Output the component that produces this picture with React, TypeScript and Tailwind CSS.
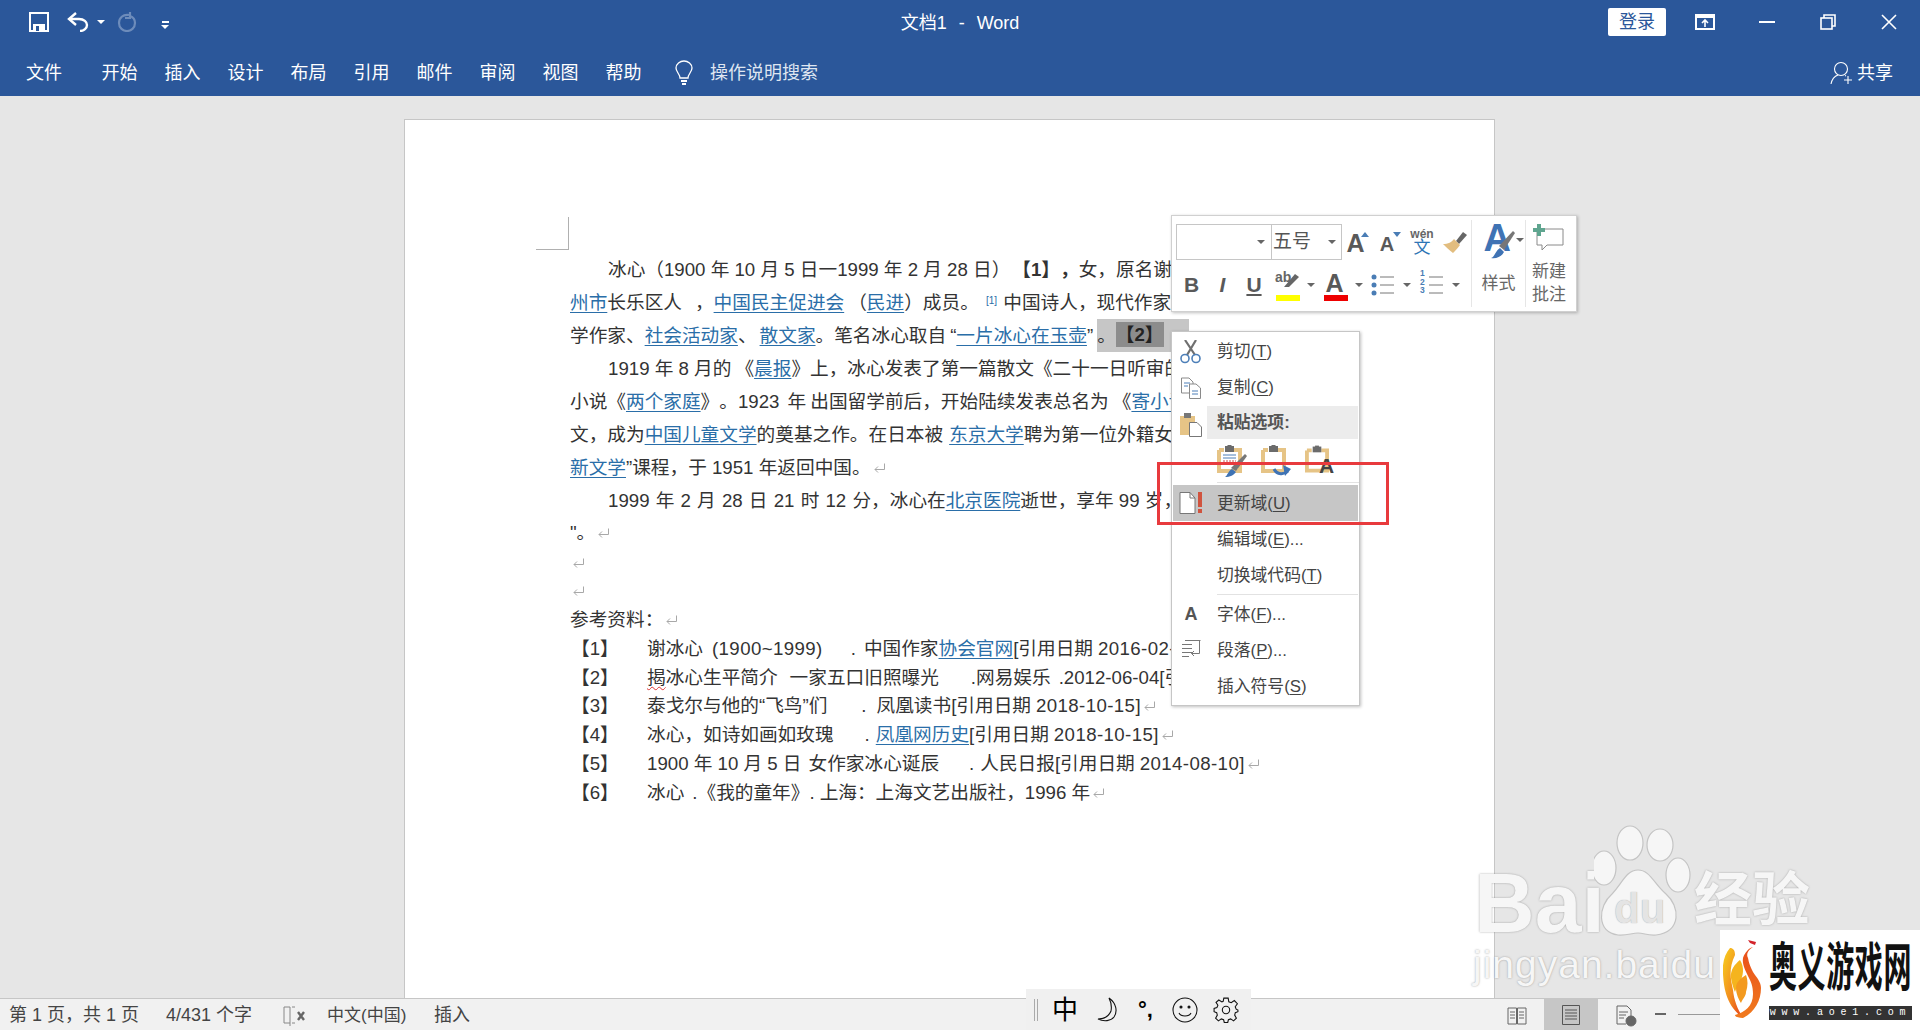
import React from "react";

const Ret = () => (
  <svg width="13" height="13" viewBox="0 0 13 13" className="inline-block align-[-1px] ml-[2px]" fill="none" stroke="#a8a8a8" strokeWidth="1">
    <path d="M11.5 1.5V7.5H2" />
    <path d="M5 4.5L2 7.5L5 10.5" />
  </svg>
);
const L = ({ children }: { children: React.ReactNode }) => (
  <a className="text-[#2a6ea8] underline underline-offset-[3px] decoration-[1px]">{children}</a>
);
const Line = ({ children, h = "h-[33px] leading-[33px]", indent = false }: { children?: React.ReactNode; h?: string; indent?: boolean }) => (
  <div className={`${h} ${indent ? "pl-[38px]" : ""} w-[790px] overflow-hidden whitespace-nowrap`}>{children}</div>
);
const Ref = ({ n, children }: { n: number; children: React.ReactNode }) => (
  <div className="h-[28.8px] leading-[28.8px] w-[790px] flex overflow-hidden whitespace-nowrap">
    <span className="w-[77px] shrink-0 pl-[1px]">【{n}】</span>
    <span>{children}</span>
  </div>
);
const D = ({ children }: { children: React.ReactNode }) => <span className="ml-[5px] tracking-[0.4px]">{children}</span>;
const Caret = ({ c = "#666" }: { c?: string }) => (
  <svg width="8" height="4" viewBox="0 0 8 4" className="shrink-0"><path d="M0 0H8L4 4Z" fill={c} /></svg>
);
const Tab = ({ t }: { t: string }) => <div className="w-[63px] text-center">{t}</div>;

const MenuItem = ({ icon, children, active = false, low = true }: { icon?: React.ReactNode; children: React.ReactNode; active?: boolean; low?: boolean }) => (
  <div className={`h-[36px] flex items-center ${active ? "bg-[#c6c6c6] mr-[1px] ml-[1px]" : "ml-[1px]"}`}>
    <div className="w-[36px] h-full shrink-0 flex items-center justify-center">{icon}</div>
    <div className={`ml-[8px] text-[16.8px] text-[#444] whitespace-nowrap ${low ? "pt-[2px]" : ""}`}>{children}</div>
  </div>
);
const U = ({ children }: { children: React.ReactNode }) => <span className="underline underline-offset-2">{children}</span>;

const ClipBase = () => (
  <>
    <path d="M2 5H7M17 5H23V26H2V5" fill="none" stroke="#e6c486" strokeWidth="4" />
    <rect x="8" y="1" width="9" height="6" fill="#6b6b6b" />
    <rect x="10.5" y="0" width="4" height="3" fill="#6b6b6b" />
  </>
);

const Toolbar = () => (
  <div className="absolute left-[1171px] top-[215px] w-[406px] h-[97px] bg-white border border-[#d0d0d0] shadow-[1px_1px_3px_rgba(0,0,0,0.25)] flex text-[#595959]">
    <div className="w-[299px] shrink-0 pl-[4px] pt-[8px]">
      <div className="flex items-center h-[36px]">
        <div className="w-[166px] h-[36px] border border-[#c6c6c6] flex shrink-0">
          <div className="w-[95px] border-r border-[#c6c6c6] flex items-center justify-end pr-[6px]"><Caret /></div>
          <div className="flex-1 flex items-center justify-between pr-[5px] pl-[1px] text-[19px] text-[#555]"><span>五号</span><Caret /></div>
        </div>
        <div className="w-[30px] h-full relative flex items-center justify-center font-bold text-[25px] text-[#595959] pr-[3px] pt-[3px]">
          A<svg width="8" height="5" className="absolute right-[3px] top-[8px]"><path d="M0 5H8L4 0Z" fill="#4a7db5" /></svg>
        </div>
        <div className="w-[32px] h-full relative flex items-center justify-center font-bold text-[20px] text-[#595959] pr-[2px] pt-[3px]">
          A<svg width="8" height="5" className="absolute right-[3px] top-[8px]"><path d="M0 0H8L4 5Z" fill="#4a7db5" /></svg>
        </div>
        <div className="w-[36px] h-full flex flex-col items-center justify-center leading-none">
          <span className="text-[12px] font-bold text-[#666]">wén</span>
          <span className="text-[17px] text-[#2e75b5] mt-[-1px]">文</span>
        </div>
        <svg width="24" height="22" viewBox="0 0 24 22" className="ml-[3px]">
          <path d="M13 10L20 1L24 4L16 13Z" fill="#666" />
          <path d="M0 13C5 13 9 11 11 8L17 14C14 18 12 20 10 22C6 19 3 16 0 13Z" fill="#e2bd7f" />
        </svg>
      </div>
      <div className="flex items-center h-[44px] mt-[3px] text-[#595959]">
        <div className="w-[31px] text-center font-bold text-[21px]">B</div>
        <div className="w-[31px] text-center font-bold italic text-[21px]">I</div>
        <div className="w-[32px] text-center font-bold text-[21px] underline underline-offset-2">U</div>
        <div className="w-[36px] h-[30px] relative">
          <span className="absolute left-[5px] top-[-3px] text-[14px] font-bold text-[#666]">ab</span>
          <svg width="16" height="16" className="absolute left-[14px] top-[2px]"><path d="M0 15L11 2L15 5L5 15Z" fill="#666" /></svg>
          <div className="absolute left-[6px] bottom-[-1px] w-[24px] h-[6px] bg-[#ffff00]" />
        </div>
        <div className="w-[10px] flex justify-center"><Caret /></div>
        <div className="w-[37px] h-[30px] relative text-center font-bold text-[25px] leading-[26px] text-[#595959]">
          A<div className="absolute left-[8px] bottom-[-1px] w-[24px] h-[6px] bg-[#ee0000]" />
        </div>
        <div className="w-[12px] flex justify-center"><Caret /></div>
        <div className="w-[35px] flex justify-center">
          <svg width="24" height="22" viewBox="0 0 24 22" fill="#4a7db5" stroke="none">
            <circle cx="3" cy="3" r="2.5" /><circle cx="3" cy="11" r="2.5" /><circle cx="3" cy="19" r="2.5" />
            <path d="M9 3H23M9 11H23M9 19H23" stroke="#777" strokeWidth="1" />
          </svg>
        </div>
        <div className="w-[14px] flex justify-center"><Caret /></div>
        <div className="w-[35px] relative flex justify-center">
          <div className="absolute left-[6px] top-[-5px] text-[#4a7db5] text-[8.5px] leading-[8.5px] font-bold text-center">1<br />2<br />3</div>
          <svg width="24" height="22" viewBox="0 0 24 22"><path d="M9 3H23M9 11H23M9 19H23" stroke="#777" strokeWidth="1" /></svg>
        </div>
        <div className="w-[14px] flex justify-center"><Caret /></div>
      </div>
    </div>
    <div className="w-[1px] bg-[#e6e6e6] my-[4px] shrink-0" />
    <div className="w-[53px] shrink-0 flex flex-col items-center pt-[8px]">
      <div className="relative w-[46px] h-[33px]">
        <span className="absolute left-[8px] top-[-6px] text-[38px] leading-[40px] font-bold text-[#3f73b4]">A</span>
        <svg width="24" height="30" viewBox="0 0 24 30" className="absolute left-[15px] top-[5px]">
          <path d="M8 17L22 2L24 4L13 21Z" fill="#777" />
          <path d="M0 29C4 28 4 22 9 19L13 23C11 27 6 30 0 29Z" fill="#3f73b4" />
        </svg>
        <div className="absolute right-[-2px] top-[14px]"><Caret /></div>
      </div>
      <div className="text-[17px] mt-[14px] text-[#666]">样式</div>
    </div>
    <div className="w-[1px] bg-[#e6e6e6] my-[4px] shrink-0" />
    <div className="flex-1 flex flex-col items-center pt-[8px] pr-[4px] leading-[23px] text-[17px] text-[#666]">
      <svg width="32" height="30" viewBox="0 0 32 30" className="shrink-0">
        <path d="M4 5H30V21H14L9 26V21H4Z" fill="none" stroke="#8a8a8a" strokeWidth="1" />
        <path d="M4 0H8V4H12V8H8V12H4V8H0V4H4Z" fill="#5fa58f" />
      </svg>
      <div className="mt-[6px]">新建</div>
      <div>批注</div>
    </div>
  </div>
);

const Menu = () => (
  <div className="absolute left-[1171px] top-[331px] w-[189px] h-[375px] bg-white border border-[#c6c6c6] shadow-[1px_1px_3px_rgba(0,0,0,0.25)] pt-[2px]">
    <MenuItem low={false} icon={
      <svg width="22" height="24" viewBox="0 0 22 24" fill="none">
        <path d="M5 0L15 15M16 0L7 15" stroke="#707070" strokeWidth="2.2" />
        <circle cx="5" cy="18.5" r="4" stroke="#4d7fb8" strokeWidth="1.6" /><circle cx="16" cy="18.5" r="4" stroke="#4d7fb8" strokeWidth="1.6" />
      </svg>
    }>剪切(<U>T</U>)</MenuItem>
    <MenuItem low={false} icon={
      <svg width="22" height="22" viewBox="0 0 22 22" fill="#fff" stroke="#8a8a8a">
        <path d="M1.5 1H9L13 5V16H1.5Z" /><path d="M9.5 7H16L20.5 11V21.5H9.5Z" />
        <path d="M4 6H10M4 9H8M12 14H18M12 17H18" stroke="#4d7fb8" />
      </svg>
    }>复制(<U>C</U>)</MenuItem>
    <div className="h-[33px] flex items-center">
      <div className="w-[35px] h-full shrink-0 flex items-center justify-center">
        <svg width="22" height="24" viewBox="0 0 22 24" className="mt-[4px] ml-[2px]">
          <rect x="0" y="3" width="15" height="19" fill="#e6c486" /><rect x="4" y="0" width="7" height="5" fill="#777" />
          <path d="M9.5 9.5H17L21.5 14V23.5H9.5Z" fill="#fff" stroke="#777" />
        </svg>
      </div>
      <div className="flex-1 h-full bg-[#ececec] mr-[1px] flex items-center pl-[10px] font-bold text-[16.8px] text-[#555]">粘贴选项:</div>
    </div>
    <div className="h-[44px] border-b border-[#e2e2e2] ml-[45px] flex gap-[20px] pt-[6px]">
      <div className="relative w-[24px] h-[30px]">
        <svg width="30" height="32" viewBox="0 0 30 32" className="absolute left-0 top-0">
          <ClipBase />
          <path d="M6 10H19M6 13H19" stroke="#4d7fb8" /><path d="M6 16H19M6 19H19" stroke="#c9534c" strokeDasharray="2 1" />
          <path d="M14 23L28 9L30 11L19 26Z" fill="#777" /><path d="M8 32C11 30 11 26 15 24L19 27C17 30 13 32 8 32Z" fill="#3f73b4" />
        </svg>
      </div>
      <div className="relative w-[24px] h-[30px]">
        <svg width="30" height="32" viewBox="0 0 30 32" className="absolute left-0 top-0">
          <ClipBase />
          <path d="M13 24C16 30 23 30 27 26" fill="none" stroke="#3f73b4" strokeWidth="3" />
          <path d="M22 20L30 24L24 31Z" fill="#3f73b4" />
        </svg>
      </div>
      <div className="relative w-[24px] h-[30px]">
        <svg width="24" height="30" viewBox="0 0 25 30" className="absolute left-0 top-0"><ClipBase /></svg>
        <span className="absolute left-[14px] top-[8px] font-bold text-[21px] leading-[26px] text-[#444]">A</span>
      </div>
    </div>
    <div className="h-[2px]" />
    <MenuItem active icon={
      <svg width="24" height="22" viewBox="0 0 24 22">
        <path d="M1 0.5H11L16 6V21.5H1Z" fill="#fff" stroke="#777" /><path d="M11 0.5V6H16" fill="none" stroke="#777" />
        <rect x="19" y="0" width="4" height="15" fill="#d0533e" /><rect x="19" y="17" width="4" height="4" fill="#d0533e" />
      </svg>
    }>更新域(<U>U</U>)</MenuItem>
    <MenuItem>编辑域(<U>E</U>)...</MenuItem>
    <MenuItem>切换域代码(<U>T</U>)</MenuItem>
    <div className="h-[3px] flex items-center pl-[45px] pr-[1px]"><div className="h-[1px] w-full bg-[#e2e2e2]" /></div>
    <MenuItem icon={<span className="font-bold text-[18px] text-[#555]">A</span>}>字体(<U>F</U>)...</MenuItem>
    <MenuItem icon={
      <svg width="20" height="20" viewBox="0 0 20 20" fill="none" stroke="#777">
        <path d="M4 0.5H19.5M1 4.5H11M1 8.5H11M1 12.5H11M1 16.5H8" />
        <path d="M18.5 1V13.5H10.5M13 11L10.5 13.5L13 16" />
      </svg>
    }>段落(<U>P</U>)...</MenuItem>
    <MenuItem>插入符号(<U>S</U>)</MenuItem>
  </div>
);

const Watermark = () => (
  <div className="absolute left-[1470px] top-[820px] w-[350px] h-[170px] pointer-events-none">
    <span className="absolute left-[4px] top-[38px] text-[84px] leading-[90px] text-[#f6f6f6] font-bold [text-shadow:0_0_2px_rgba(100,100,100,0.6)]">Bai</span>
    <svg width="100" height="120" viewBox="0 0 100 120" className="absolute left-[124px] top-0">
      <g fill="#f6f6f6" stroke="#c4c4c4" strokeWidth="1.2">
        <ellipse cx="36" cy="23" rx="13" ry="17" /><ellipse cx="66" cy="25" rx="13" ry="16" />
        <ellipse cx="10" cy="48" rx="12" ry="17" /><ellipse cx="84" cy="55" rx="12" ry="17" />
        <path d="M44 50C56 50 60 64 72 74C86 86 88 112 62 115C54 116 50 113 44 113C38 113 32 116 24 115C2 112 4 86 18 74C28 64 32 50 44 50Z" />
      </g>
    </svg>
    <span className="absolute left-[144px] top-[66px] text-[42px] leading-[46px] text-[#e4e4e4] font-bold [text-shadow:0_0_1px_rgba(100,100,100,0.6)]">du</span>
    <span className="absolute left-[224px] top-[48px] text-[58px] leading-[64px] text-[#f6f6f6] font-bold [text-shadow:0_0_2px_rgba(100,100,100,0.55)]">经验</span>
    <span className="absolute left-[3px] top-[122px] text-[39px] leading-[46px] text-[#f6f6f6] tracking-[1px] [text-shadow:0_0_2px_rgba(100,100,100,0.6)]">jingyan.baidu</span>
  </div>
);

const AoyiLogo = () => (
  <div className="absolute right-0 bottom-0 w-[200px] h-[100px] bg-white flex">
    <svg width="40" height="80" viewBox="0 0 40 80" className="ml-[3px] mt-[10px] shrink-0">
      <defs>
        <linearGradient id="fl" x1="0" y1="0" x2="1" y2="1">
          <stop offset="0" stopColor="#f7d21e" /><stop offset="0.55" stopColor="#f28a1f" /><stop offset="1" stopColor="#e33b1b" />
        </linearGradient>
        <linearGradient id="fr" x1="0" y1="0" x2="0" y2="1">
          <stop offset="0" stopColor="#e94e1b" /><stop offset="1" stopColor="#f07a1e" />
        </linearGradient>
      </defs>
      <path d="M7 8C2 14 -1 22 0 34C1 50 4 66 20 78C14 68 11 60 10 50C8 40 5 30 12 15C12 10 10 8 7 8Z" fill="url(#fl)" />
      <path d="M17 20C12 24 7 30 8 38C9 44 11 50 12 52C14 46 16 44 17 42C20 36 22 28 17 20Z" fill="#f5b41e" />
      <path d="M23 35C18 38 13 42 13 48C13 54 16 60 18 63C20 58 23 56 23 52C25 46 25 40 23 35Z" fill="#f39a1f" />
      <path d="M30 7C25 10 23 14 25 18C26 24 28 28 30 32C34 38 38 42 38 48C38 60 32 72 20 78C14 78 12 76 12 75C22 72 30 66 30 54C30 46 28 42 26 38C22 30 19 24 20 18C22 12 26 8 30 7Z" fill="url(#fr)" />
      <path d="M25 0L33 2L32 5L27 3Z" fill="#d3232a" />
    </svg>
    <div className="ml-[6px] w-[143px] shrink-0">
      <div className="mt-[14px] h-[50px] text-[28px] leading-[50px] font-bold text-[#111] whitespace-nowrap [transform:scaleY(1.85)] origin-center tracking-[0.6px]">奥义游戏网</div>
      <div className="mt-[12px] h-[14px] bg-[#333] text-white text-[10px] leading-[14px] text-center tracking-[5.8px] whitespace-nowrap [font-family:'Liberation_Mono',monospace]">www.aoe1.com</div>
    </div>
  </div>
);

export default function App() {
  return (
    <div lang="zh-CN" className="relative w-[1920px] h-[1030px] overflow-hidden flex flex-col bg-[#e6e6e6] [text-spacing-trim:space-all] [font-family:'Liberation_Sans','Noto_Sans_CJK_SC',sans-serif]">
      <header className="h-[96px] bg-[#2b579a] text-white shrink-0 flex flex-col">
        <div className="h-[44px] flex items-center relative">
          <svg width="20" height="20" viewBox="0 0 20 20" className="ml-[29px] shrink-0">
            <path d="M1 1H19V19H1Z" fill="none" stroke="#fff" strokeWidth="2" />
            <rect x="4" y="12" width="12" height="7" fill="#fff" /><rect x="7" y="14" width="3" height="5" fill="#2b579a" />
          </svg>
          <svg width="22" height="20" viewBox="0 0 22 20" fill="none" stroke="#fff" strokeWidth="2.4" className="ml-[18px] shrink-0">
            <path d="M9 1L2 7L9 13" /><path d="M3 7H12C17 7 20 10 20 13C20 16 17 19 13 19" />
          </svg>
          <div className="ml-[8px]"><Caret c="#fff" /></div>
          <svg width="20" height="20" viewBox="0 0 20 20" fill="none" stroke="#6d8cbb" strokeWidth="2.2" className="ml-[12px] shrink-0">
            <path d="M12 3C6 2 2 6 2 11C2 16 6 19 10 19C14 19 18 16 18 11C18 8 16 5 13 4" /><path d="M13 0V6H8" />
          </svg>
          <div className="ml-[24px] mt-[6px] flex flex-col items-center gap-[2px]">
            <div className="w-[7px] h-[1.5px] bg-white" /><Caret c="#fff" />
          </div>
          <div className="absolute left-0 right-0 top-[10px] text-center text-[18px] leading-[26px] [word-spacing:1px]">文档1&nbsp; -&nbsp; Word</div>
          <div className="ml-auto flex items-center">
            <div className="w-[58px] h-[28px] bg-white rounded-[2px] text-[#2b579a] text-[18px] leading-[28px] text-center">登录</div>
            <svg width="20" height="16" viewBox="0 0 20 16" fill="none" stroke="#fff" className="ml-[29px]">
              <rect x="1" y="1" width="18" height="14" strokeWidth="2" /><path d="M1 3H19" strokeWidth="2" /><path d="M10 13V6M7 9L10 6L13 9" strokeWidth="1.6" />
            </svg>
            <div className="ml-[44px] w-[16px] h-[2px] bg-white" />
            <svg width="16" height="16" viewBox="0 0 16 16" fill="none" stroke="#fff" strokeWidth="1.6" className="ml-[45px]">
              <rect x="1" y="4" width="11" height="11" /><path d="M4 4V1H15V12H12" />
            </svg>
            <svg width="16" height="16" viewBox="0 0 16 16" fill="none" stroke="#fff" strokeWidth="1.6" className="ml-[45px] mr-[23px]">
              <path d="M1 1L15 15M15 1L1 15" />
            </svg>
          </div>
        </div>
        <div className="flex-1 flex items-center text-[18px] pt-[6px]">
          <div className="ml-[8px] w-[72px] text-center">文件</div>
          <div className="ml-[8px] flex">
            {["开始", "插入", "设计", "布局", "引用", "邮件", "审阅", "视图", "帮助"].map((t) => <Tab key={t} t={t} />)}
          </div>
          <svg width="20" height="26" viewBox="0 0 20 26" fill="none" stroke="#fff" strokeWidth="1.3" className="ml-[19px]">
            <path d="M6 18C6 14 2 12 2 8C2 4 6 1 10 1C14 1 18 4 18 8C18 12 14 14 14 18Z" /><path d="M7 21H13M8 24H12" strokeWidth="1.8" />
          </svg>
          <div className="ml-[16px] text-[#dfe6f1]">操作说明搜索</div>
          <svg width="22" height="24" viewBox="0 0 22 24" fill="none" stroke="#fff" strokeWidth="1.1" className="ml-auto">
            <circle cx="11" cy="8" r="6.5" /><path d="M1 23C2 18 5 15 8 14M15 14.5L16 15M14 19H22M18 15V23" />
          </svg>
          <div className="ml-[5px] mr-[27px]">共享</div>
        </div>
      </header>

      <main className="flex-1 relative overflow-hidden pt-[23px]">
        <div className="relative ml-[404px] w-[1091px] h-[900px] bg-white border-x border-t border-[#c6c6c6] pl-[165px] pt-[132.5px] text-[18.67px] text-[#333]">
          <div className="absolute left-[131px] top-[97px] w-[33px] h-[33px] border-r border-b border-[#b0b0b0]" />
          <Line indent>冰心（1900 年 10 月 5 日一1999 年 2 月 28 日）<b className="ml-[2px]">【1】，</b>女，原名谢婉莹，福建省福</Line>
          <Line><L>州市</L>长乐区人<span className="ml-[13px]">，</span><L>中国民主促进会</L><span className="ml-[4px]">（</span><L>民进</L>）成员。 <sup className="text-[10px] text-[#2a6ea8] ml-[2px]">[1]</sup><span className="ml-[1px]"> 中国诗人，现代作家、儿童文</span></Line>
          <Line>学作家、<L>社会活动家</L><span className="mr-[3px]">、</span><L>散文家</L>。笔名冰心取自<span className="ml-[4px]">“</span><L>一片冰心在玉壶</L><span className="mr-[4px]">”</span><span className="inline-block h-[33px] bg-[#c6c6c6] pr-[25px]">。<span className="inline-block h-[25px] leading-[25px] align-[1px] bg-[#8c8c8c] font-bold text-[#222]">【2】</span></span></Line>
          <Line indent>1919 年 8 月的<span className="ml-[4px]">《</span><L>晨报</L>》上，冰心发表了第一篇散文《二十一日听审的感想》</Line>
          <Line>小说《<L>两个家庭</L>》。1923 <span className="ml-[3px]">年</span><span className="ml-[4px]">出国留学前后，开始陆续发表总名为</span><span className="ml-[4px]">《</span><L>寄小读者</L>》的通讯散</Line>
          <Line>文，成为<L>中国儿童文学</L>的奠基之作。在日本被<span className="ml-[6px]"><L>东京大学</L></span>聘为第一位外籍女教授，讲授</Line>
          <Line><L>新文学</L>”课程，于 1951 年返回中国。<Ret /></Line>
          <Line indent><span className="[word-spacing:1px]">1999 年 2 月 28 日 21 时 12 分，</span>冰心在<L>北京医院</L>逝世，享年 99 岁，被称为“世纪老人</Line>
          <Line h="h-[32px] leading-[32px]">"。<Ret /></Line>
          <Line h="h-[28.8px] leading-[28.8px]"><Ret /></Line>
          <Line h="h-[28.8px] leading-[28.8px]"><Ret /></Line>
          <Line h="h-[28.8px] leading-[28.8px]">参考资料：<Ret /></Line>
          <Ref n={1}>谢冰心<span className="ml-[9px] tracking-[0.4px]">(1900~1999)</span><span className="ml-[28px]">.</span><span className="ml-[8px]">中国作家</span><L>协会官网</L>[引用日期<D>2016-02-14]</D></Ref>
          <Ref n={2}><span className="underline decoration-wavy decoration-[#d33] decoration-[1px] underline-offset-2">揭</span>冰心生平简介<span className="ml-[12px]">一家五口旧照曝光</span><span className="ml-[32px]">.网易娱乐</span><span className="ml-[8px]">.2012-06-04[引用日期</span></Ref>
          <Ref n={3}>泰戈尔与他的“飞鸟”们<span className="ml-[34px]">.</span><span className="ml-[10px]">凤凰读书[引用日期<D>2018-10-15]</D></span><Ret /></Ref>
          <Ref n={4}>冰心，如诗如画如玫瑰<span className="ml-[31px]">.</span><span className="ml-[6px]"><L>凤凰网历史</L>[引用日期<D>2018-10-15]</D></span><Ret /></Ref>
          <Ref n={5}>1900 年 10 月 5 日<span className="ml-[7px]">女作家冰心诞辰</span><span className="ml-[30px]">.</span><span className="ml-[6px]">人民日报[引用日期<D>2014-08-10]</D></span><Ret /></Ref>
          <Ref n={6}>冰心<span className="ml-[8px]">.《我的童年》.</span><span className="ml-[5px]">上海：上海文艺出版社，1996 年</span><Ret /></Ref>
        </div>
      </main>

      <footer className="h-[32px] shrink-0 bg-[#f1f1f1] border-t border-[#c6c6c6] flex items-center text-[18px] text-[#444] relative z-10 pt-[2px]">
        <span className="ml-[9px] w-[157px] shrink-0 whitespace-nowrap">第 1 页，共 1 页</span>
        <span className="w-[117px] shrink-0 whitespace-nowrap">4/431 个字</span>
        <svg width="22" height="22" viewBox="0 0 22 22" fill="none" stroke="#888" className="shrink-0">
          <path d="M1 2H7V18H1ZM9 2H12M9 18H12M7 18L7 21" /><path d="M15 7L21 15M21 7L15 15" stroke="#666" strokeWidth="2.4" />
        </svg>
        <span className="ml-[22px] w-[107px] shrink-0 text-[17px] whitespace-nowrap">中文(中国)</span>
        <span>插入</span>
        <div className="absolute left-[1507px] top-[8px]">
          <svg width="20" height="18" viewBox="0 0 20 18" fill="none" stroke="#666"><path d="M1 1H9.5V17H1ZM10.5 1H19V17H10.5ZM3 5H8M3 8H8M3 11H8M12 5H17M12 8H17M12 11H17" /></svg>
        </div>
        <div className="absolute left-[1544px] top-0 w-[54px] h-[31px] bg-[#c6c6c6] flex items-center justify-center">
          <svg width="18" height="20" viewBox="0 0 18 20" fill="none" stroke="#555"><path d="M0.5 0.5H17.5V19.5H0.5ZM3 5H15M3 8H15M3 11H15M3 14H15" /></svg>
        </div>
        <div className="absolute left-[1616px] top-[6px]">
          <svg width="22" height="22" viewBox="0 0 22 22" fill="none" stroke="#666"><path d="M1 1H11L15 5V11M10 19H1V1M3 7H12M3 10H10M3 13H8" /><circle cx="15" cy="16" r="5" fill="#666" /></svg>
        </div>
        <div className="absolute left-[1655px] top-[14px] w-[11px] h-[2px] bg-[#666]" />
        <div className="absolute left-[1678px] top-[15px] w-[60px] h-[1px] bg-[#999]" />
      </footer>

      <div className="absolute left-[1026px] top-[989px] w-[225px] h-[41px] bg-[#f0f0f0] z-20 flex items-center text-black">
        <div className="ml-[8px] w-[4px] h-[22px] border-x border-[#aaa]" />
        <span className="ml-[14px] text-[26px] leading-none">中</span>
        <svg width="26" height="26" viewBox="0 0 26 26" fill="none" stroke="#111" strokeWidth="1.1" className="ml-[18px]">
          <path d="M13 1C20 6 22 14 18 20C15 24 8 25 2 22C9 22 13 19 15 14C16 9 15 5 13 1Z" />
        </svg>
        <span className="ml-[16px] text-[22px] leading-none font-bold">°,</span>
        <svg width="26" height="26" viewBox="0 0 26 26" fill="none" stroke="#111" strokeWidth="1.1" className="ml-[19px]">
          <circle cx="13" cy="13" r="12" /><circle cx="9" cy="10" r="1" fill="#111" /><circle cx="17" cy="10" r="1" fill="#111" /><path d="M7 16C9 20 17 20 19 16" />
        </svg>
        <svg width="26" height="26" viewBox="0 0 24 24" fill="none" stroke="#111" strokeWidth="1" className="ml-[15px]">
          <circle cx="12" cy="12" r="3.4" />
          <path d="M10 1H14L14.6 4.4L16.8 5.3L19.7 3.3L22.5 6.2L20.5 9L21.4 11.2L23 12V13.5L20.6 14.5L20 16.7L21.6 19.6L19 22L16.3 20.2L14.2 21L13.6 23.5H10.4L9.8 21L7.7 20.2L5 22L2.4 19.6L4 16.7L3.4 14.5L1 13.5V10.5L3.6 9.8L4.5 7.6L2.8 5L5.4 2.8L8.2 4.5L9.4 4Z" />
        </svg>
      </div>

      <Toolbar />
      <Menu />
      <div className="absolute left-[1157px] top-[462px] w-[232px] h-[63px] border-[3px] border-[#e83a3d] z-10" />
      <Watermark />
      <div className="z-30"><AoyiLogo /></div>
    </div>
  );
}
